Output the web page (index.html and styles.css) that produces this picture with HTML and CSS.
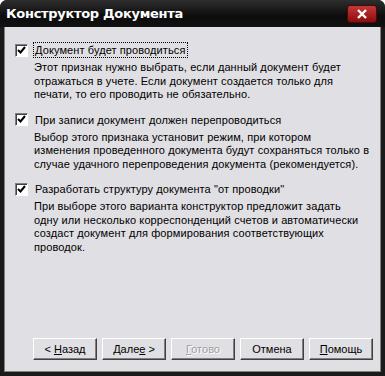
FILE: index.html
```html
<!DOCTYPE html>
<html lang="ru">
<head>
  <meta charset="UTF-8" />
  <title>Конструктор Документа</title>
  <link rel="stylesheet" href="styles.css">
</head>
<body>
  <div class="window">
    <div class="titlebar">
      <span class="title">Конструктор Документа</span>
      <span class="close">
        <svg width="12" height="10" viewBox="0 0 12 10"><path d="M2 1 L10 9 M10 1 L2 9" stroke="#fff" stroke-width="2.4"/></svg>
      </span>
    </div>
    <div class="client">
      <div class="option">
        <div class="check-row">
          <span class="box"><svg width="9" height="9" viewBox="0 0 9 9"><path d="M1 4 L3.5 6.5 L8 1" stroke="#000" stroke-width="2" fill="none"/></svg></span>
          <span class="label focused">Документ будет проводиться</span>
        </div>
        <p class="desc">Этот признак нужно выбрать, если данный документ будет<br>отражаться в учете. Если документ создается только для<br>печати, то его проводить не обязательно.</p>
      </div>
      <div class="option">
        <div class="check-row">
          <span class="box"><svg width="9" height="9" viewBox="0 0 9 9"><path d="M1 4 L3.5 6.5 L8 1" stroke="#000" stroke-width="2" fill="none"/></svg></span>
          <span class="label">При записи документ должен перепроводиться</span>
        </div>
        <p class="desc">Выбор этого признака установит режим, при котором<br>изменения проведенного документа будут сохраняться только в<br>случае удачного перепроведения документа (рекомендуется).</p>
      </div>
      <div class="option">
        <div class="check-row">
          <span class="box"><svg width="9" height="9" viewBox="0 0 9 9"><path d="M1 4 L3.5 6.5 L8 1" stroke="#000" stroke-width="2" fill="none"/></svg></span>
          <span class="label">Разработать структуру документа "от проводки"</span>
        </div>
        <p class="desc">При выборе этого варианта конструктор предложит задать<br>одну или несколько корреспонденций счетов и автоматически<br>создаст документ для формирования соответствующих<br>проводок.</p>
      </div>
      <div class="buttons">
        <button>&lt; <u>Н</u>азад</button>
        <button>Дале<u>е</u> &gt;</button>
        <button disabled><u>Г</u>отово</button>
        <button>Отмена</button>
        <button><u>П</u>омощь</button>
      </div>
    </div>
  </div>
</body>
</html>
```

FILE: styles.css
```css
html, body { margin: 0; padding: 0; background: #fff; }
body { font-family: "Liberation Sans", Arial, sans-serif; font-size: 11px; color: #000; }
.window { width: 385px; height: 376px; background: #1a1a1a; display: flex; flex-direction: column; box-sizing: border-box; border-radius: 7px 7px 0 0; overflow: hidden; }
.titlebar { height: 27px; display: flex; align-items: center; justify-content: space-between; padding: 0 8px 0 6px; background: linear-gradient(#2e2e2e, #0c0c0c 60%, #111); flex-shrink: 0; }
.title { color: #fff; font-weight: bold; font-size: 13px; font-family: "DejaVu Sans", sans-serif; letter-spacing: -0.3px; }
.close { width: 30px; height: 18px; border-radius: 3px; border: 1px solid #4a0808; background: linear-gradient(#c43838, #8c0c0c); display: flex; align-items: center; justify-content: center; box-sizing: border-box; }
.client { flex: 1; background: #e0dfe3; margin: 0 4px 4px 4px; border-left: 1px solid #808080; border-right: 1px solid #808080; border-bottom: 1px solid #808080; display: flex; flex-direction: column; padding: 15px 0 0 10px; }
.option { margin-bottom: 10px; letter-spacing: 0.1px; }
.check-row { display: flex; align-items: center; gap: 5px; height: 16px; }
.box { width: 11px; height: 11px; border: 1px solid; border-color: #7f7f7f #fff #fff #7f7f7f; box-shadow: inset 1px 1px 0 #404040; background: #fff; display: flex; align-items: center; justify-content: center; }
.label { padding: 0 1px; line-height: 14px; border: 1px solid transparent; }
.label.focused { border: 1px dotted #000; }
.desc { margin: 3px 0 0 19px; line-height: 13.5px; white-space: nowrap; }
.buttons { margin-top: auto; display: flex; gap: 5px; justify-content: flex-end; padding: 0 7px 11px 0; }
button { width: 64px; height: 22px; font-family: inherit; font-size: 11px; background: #e0dfe3; border: 1px solid; border-color: #fff #404040 #404040 #fff; box-shadow: inset -1px -1px 0 #808080; padding: 0; color: #000; }
button:disabled { color: #a0a0a0; text-shadow: 1px 1px 0 #fff; }
```
